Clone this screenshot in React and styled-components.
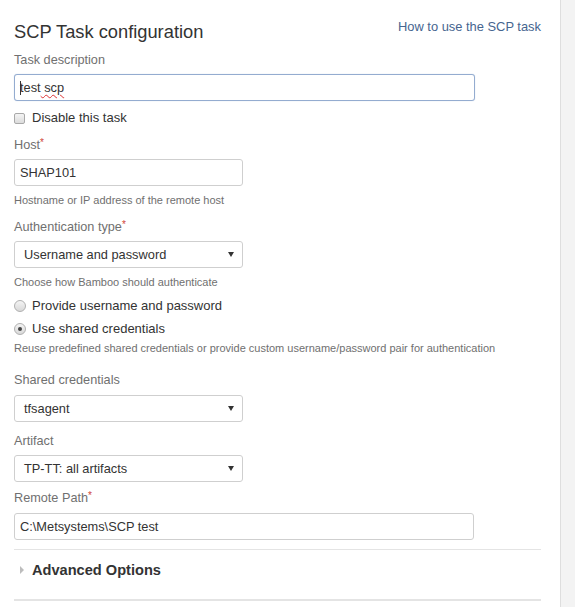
import styled, { createGlobalStyle } from 'styled-components'

const GlobalStyle = createGlobalStyle`
  html, body {
    margin: 0;
    padding: 0;
    height: 100%;
    background: #fff;
  }
  body {
    font-family: "Liberation Sans", Arial, sans-serif;
    color: #333;
  }
  #root {
    height: 100%;
  }
`

const Page = styled.div`
  display: flex;
  height: 100vh;
  overflow: hidden;
`

const Main = styled.div`
  flex: 1;
  padding: 0 19px 0 14px;
  display: flex;
  flex-direction: column;
  align-items: flex-start;
`

const SideStrip = styled.div`
  width: 14px;
  background: #f3f3f3;
  border-left: 1px solid #dedede;
`

const Header = styled.div`
  align-self: stretch;
  display: flex;
  justify-content: space-between;
  align-items: flex-start;
  margin-top: 20px;
  height: 24px;
`

const Title = styled.h2`
  margin: 0;
  font-size: 18.3px;
  line-height: 24px;
  font-weight: normal;
  color: #333;
`

const HelpLink = styled.a`
  margin-top: -1px;
  font-size: 12.9px;
  line-height: 16px;
  color: #46658f;
  text-decoration: none;
`

const Label = styled.label`
  margin-top: ${p => p.$mt}px;
  font-size: 12.7px;
  line-height: 16px;
  color: #707070;
`

const Required = styled.span`
  color: #d04437;
  font-size: 10px;
  vertical-align: top;
  position: relative;
  top: -2px;
`

const TextBox = styled.div`
  margin-top: ${p => p.$mt}px;
  width: ${p => p.$w}px;
  height: 27px;
  box-sizing: border-box;
  border: 1px solid ${p => (p.$focused ? '#94acd0' : '#cfcfcf')};
  border-radius: 3px;
  padding: 0 5px;
  display: flex;
  align-items: center;
  font-size: 12.8px;
  color: #333;
  background: #fff;
  box-shadow: ${p => (p.$focused ? '0 0 1px #b7c9e2' : 'none')};
`

const Caret = styled.span`
  display: inline-block;
  width: 1px;
  height: 14px;
  background: #333;
  margin-right: -1px;
`

const Misspelled = styled.span`
  text-decoration: underline wavy #d33;
  text-decoration-thickness: 1px;
  text-underline-offset: 2px;
`

const SelectBox = styled.div`
  margin-top: ${p => p.$mt}px;
  width: 229px;
  height: 27px;
  box-sizing: border-box;
  border: 1px solid #cfcfcf;
  border-radius: 3px;
  padding: 0 8px 0 9px;
  display: flex;
  align-items: center;
  justify-content: space-between;
  font-size: 12.8px;
  color: #333;
  background: #fff;
`

const Arrow = styled.span`
  width: 0;
  height: 0;
  border-left: 3px solid transparent;
  border-right: 3px solid transparent;
  border-top: 5px solid #333;
`

const HelpText = styled.div`
  margin-top: ${p => p.$mt}px;
  font-size: 11px;
  line-height: 14px;
  color: #707070;
`

const OptionRow = styled.div`
  margin-top: ${p => p.$mt}px;
  display: flex;
  align-items: center;
  gap: 6px;
  font-size: 13px;
  line-height: 18px;
  color: #333;
`

const CheckMark = styled.span`
  width: 11px;
  height: 11px;
  box-sizing: border-box;
  border: 1px solid #a9a9a9;
  border-radius: 2px;
  background: linear-gradient(#f4f4f4, #dcdcdc);
  margin-right: 1px;
`

const RadioMark = styled.span`
  width: 12px;
  height: 12px;
  box-sizing: border-box;
  border: 1px solid #b0b0b0;
  border-radius: 50%;
  background: linear-gradient(#f4f4f4, #d8d8d8);
  display: flex;
  align-items: center;
  justify-content: center;

  &::after {
    content: '';
    width: 4px;
    height: 4px;
    border-radius: 50%;
    background: ${p => (p.$checked ? '#444' : 'transparent')};
  }
`

const Divider = styled.hr`
  align-self: stretch;
  margin: ${p => p.$mt}px 0 0;
  border: 0;
  border-top: ${p => p.$size || 1}px solid #e4e4e4;
`

const Section = styled.div`
  margin-top: 10px;
  display: flex;
  align-items: center;
  gap: 8px;
  font-size: 14.6px;
  font-weight: bold;
  line-height: 20px;
  color: #333;
`

const Twisty = styled.span`
  margin-left: 6px;
  width: 0;
  height: 0;
  border-top: 4px solid transparent;
  border-bottom: 4px solid transparent;
  border-left: 4px solid #bdbdbd;
`

export default function App() {
  return (
    <Page>
      <GlobalStyle />
      <Main>
        <Header>
          <Title>SCP Task configuration</Title>
          <HelpLink href="#">How to use the SCP task</HelpLink>
        </Header>

        <Label $mt={8}>Task description</Label>
        <TextBox $mt={6} $w={461} $focused>
          <Caret />test <Misspelled>&nbsp;scp</Misspelled>
        </TextBox>

        <OptionRow $mt={8}>
          <CheckMark />
          Disable this task
        </OptionRow>

        <Label $mt={10}>Host<Required>*</Required></Label>
        <TextBox $mt={6} $w={229}>SHAP101</TextBox>
        <HelpText $mt={7}>Hostname or IP address of the remote host</HelpText>

        <Label $mt={12}>Authentication type<Required>*</Required></Label>
        <SelectBox $mt={6}>
          Username and password
          <Arrow />
        </SelectBox>
        <HelpText $mt={7}>Choose how Bamboo should authenticate</HelpText>

        <OptionRow $mt={8}>
          <RadioMark />
          Provide username and password
        </OptionRow>
        <OptionRow $mt={5}>
          <RadioMark $checked />
          Use shared credentials
        </OptionRow>
        <HelpText $mt={3}>
          Reuse predefined shared credentials or provide custom username/password pair for authentication
        </HelpText>

        <Label $mt={17}>Shared credentials</Label>
        <SelectBox $mt={7}>
          tfsagent
          <Arrow />
        </SelectBox>

        <Label $mt={11}>Artifact</Label>
        <SelectBox $mt={6}>
          TP-TT: all artifacts
          <Arrow />
        </SelectBox>

        <Label $mt={8}>Remote Path<Required>*</Required></Label>
        <TextBox $mt={7} $w={460}>C:\Metsystems\SCP test</TextBox>

        <Divider $mt={9} />
        <Section>
          <Twisty />
          Advanced Options
        </Section>
        <Divider $mt={19} $size={2} />
      </Main>
      <SideStrip />
    </Page>
  )
}
